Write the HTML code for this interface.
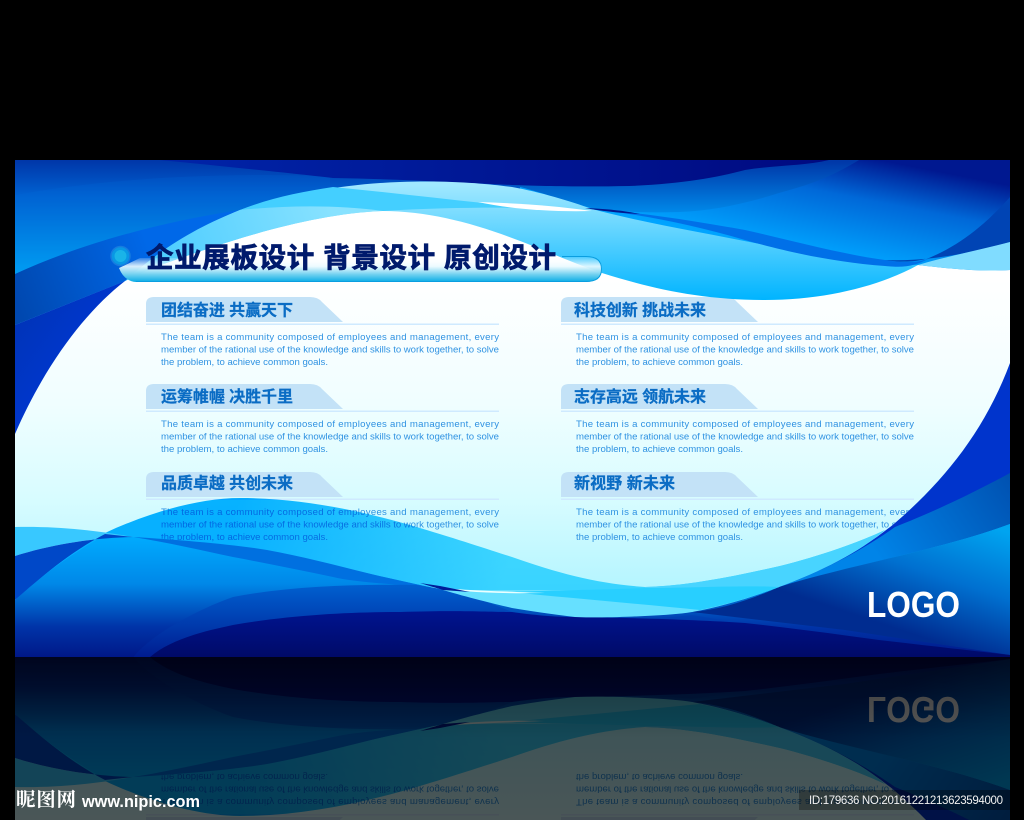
<!DOCTYPE html>
<html><head><meta charset="utf-8"><style>
html,body{margin:0;padding:0;background:#000;width:1024px;height:820px;overflow:hidden}
svg{display:block}
.t{font-family:"Liberation Sans","Noto Sans CJK SC",sans-serif;font-weight:700}
.h{font-size:16px;fill:#0a6cc4;stroke:#0a6cc4;stroke-width:.25}
.b{font-family:"Liberation Sans",sans-serif;font-size:9.6px;fill:#2f92e2}
</style></head><body>
<svg width="1024" height="820" viewBox="0 0 1024 820" xmlns="http://www.w3.org/2000/svg">
<defs>
<clipPath id="bc"><rect x="15" y="160" width="995" height="497"/></clipPath>
<clipPath id="rc"><rect x="15" y="657" width="995" height="163"/></clipPath>
<linearGradient id="base" gradientUnits="userSpaceOnUse" x1="0" y1="280" x2="0" y2="590"><stop offset="0" stop-color="#fff"/><stop offset=".4" stop-color="#f0feff"/><stop offset=".7" stop-color="#d8fcff"/><stop offset="1" stop-color="#b4f5ff"/></linearGradient>
<linearGradient id="topL" gradientUnits="userSpaceOnUse" x1="60" y1="160" x2="60" y2="275"><stop offset="0" stop-color="#0036a8"/><stop offset=".3" stop-color="#0060d0"/><stop offset="1" stop-color="#00a8f8"/></linearGradient>
<linearGradient id="topR" gradientUnits="userSpaceOnUse" x1="880" y1="160" x2="860" y2="262"><stop offset="0" stop-color="#001890"/><stop offset=".4" stop-color="#0068d8"/><stop offset="1" stop-color="#00a4ff"/></linearGradient>
<linearGradient id="swoosh" gradientUnits="userSpaceOnUse" x1="0" y1="185" x2="0" y2="300"><stop offset="0" stop-color="#a0e8ff"/><stop offset=".4" stop-color="#62d4ff"/><stop offset="1" stop-color="#00b4ff"/></linearGradient>
<linearGradient id="mid" gradientUnits="userSpaceOnUse" x1="0" y1="162" x2="0" y2="212"><stop offset="0" stop-color="#0038a8"/><stop offset="1" stop-color="#0088e8"/></linearGradient>
<linearGradient id="dark" gradientUnits="userSpaceOnUse" x1="160" y1="0" x2="830" y2="0"><stop offset="0" stop-color="#0024a8"/><stop offset="1" stop-color="#000a80"/></linearGradient>
<linearGradient id="cres" gradientUnits="userSpaceOnUse" x1="125" y1="280" x2="330" y2="205"><stop offset="0" stop-color="#40c8ff"/><stop offset="1" stop-color="#88e2ff"/></linearGradient>
<linearGradient id="wedge" gradientUnits="userSpaceOnUse" x1="15" y1="320" x2="100" y2="380"><stop offset="0" stop-color="#0034b8"/><stop offset="1" stop-color="#0038d8"/></linearGradient>
<linearGradient id="wedgeL" gradientUnits="userSpaceOnUse" x1="15" y1="300" x2="150" y2="250"><stop offset="0" stop-color="#0048b0"/><stop offset="1" stop-color="#0068e8"/></linearGradient>
<linearGradient id="botB" gradientUnits="userSpaceOnUse" x1="0" y1="535" x2="0" y2="657"><stop offset="0" stop-color="#00acff"/><stop offset=".4" stop-color="#0088e8"/><stop offset=".75" stop-color="#0034a8"/><stop offset="1" stop-color="#001888"/></linearGradient>
<linearGradient id="botM" gradientUnits="userSpaceOnUse" x1="0" y1="585" x2="0" y2="657"><stop offset="0" stop-color="#0060d0"/><stop offset="1" stop-color="#001c90"/></linearGradient>
<linearGradient id="botD" gradientUnits="userSpaceOnUse" x1="0" y1="610" x2="0" y2="657"><stop offset="0" stop-color="#001490"/><stop offset="1" stop-color="#000a68"/></linearGradient>
<linearGradient id="rightB" gradientUnits="userSpaceOnUse" x1="1000" y1="530" x2="960" y2="650"><stop offset="0" stop-color="#00a4f0"/><stop offset=".5" stop-color="#0070d0"/><stop offset="1" stop-color="#002c90"/></linearGradient>
<linearGradient id="rightM" gradientUnits="userSpaceOnUse" x1="1010" y1="470" x2="880" y2="560"><stop offset="0" stop-color="#0050b0"/><stop offset="1" stop-color="#0084e8"/></linearGradient>
<linearGradient id="wave" gradientUnits="userSpaceOnUse" x1="240" y1="498" x2="500" y2="590"><stop offset="0" stop-color="#08b4ff"/><stop offset="1" stop-color="#50dcff"/></linearGradient>
<linearGradient id="pill" gradientUnits="userSpaceOnUse" x1="0" y1="256" x2="0" y2="282"><stop offset="0" stop-color="#fff" stop-opacity="0"/><stop offset=".4" stop-color="#eafaff" stop-opacity=".92"/><stop offset=".7" stop-color="#74d2f0"/><stop offset="1" stop-color="#08ace6"/></linearGradient>
<linearGradient id="fade" gradientUnits="userSpaceOnUse" x1="0" y1="657" x2="0" y2="820"><stop offset="0" stop-color="#000" stop-opacity=".35"/><stop offset=".5" stop-color="#000" stop-opacity="0"/></linearGradient>

<g id="art" clip-path="url(#bc)">
  <rect x="15" y="160" width="995" height="497" fill="url(#base)"/>

  <g id="sec">
    <path d="M146,322V304Q146,297 154,297H310Q318,297 322,302L343,322Z" fill="#c3e2f7"/>
    <rect x="146" y="323.500" width="353" height="1.500" fill="#cfeaff"/>
    <text class="b" x="161" y="340" textLength="338" lengthAdjust="spacing">The team is a community composed of employees and management, every</text>
    <text class="b" x="161" y="352.500" textLength="338" lengthAdjust="spacing">member of the rational use of the knowledge and skills to work together, to solve</text>
    <text class="b" x="161" y="365" textLength="167" lengthAdjust="spacing">the problem, to achieve common goals.</text>
  </g>
  <text class="t h" x="161" y="315.500" textLength="132">团结奋进 共赢天下</text>
  <use href="#sec" x="0" y="87"/>
  <text class="t h" x="161" y="402" textLength="132">运筹帷幄 决胜千里</text>
  <use href="#sec" x="0" y="175"/>
  <text class="t h" x="161" y="488.500" textLength="132">品质卓越 共创未来</text>
  <use href="#sec" x="415" y="0"/>
  <text class="t h" x="574" y="315.500" textLength="132">科技创新 挑战未来</text>
  <use href="#sec" x="415" y="87"/>
  <text class="t h" x="574" y="402" textLength="132">志存高远 领航未来</text>
  <use href="#sec" x="415" y="175"/>
  <text class="t h" x="574" y="488.500" textLength="101">新视野 新未来</text>

  <!-- top area -->
  <path d="M15,160H1010V270C975,272 945,268 918,265L765,290L520,200L383,205L240,215L125,281L15,325Z" fill="url(#topR)"/>
  <path d="M15,160H520V200L383,205L240,215L125,281L15,325Z" fill="url(#topL)"/>
  <path d="M15,195C100,180 200,172 330,176V200L240,210L15,285Z" fill="#0070e0" opacity=".18"/>
  <path d="M15,274C80,244 160,222 240,210C200,228 160,252 125,281L15,325Z" fill="url(#wedgeL)"/>
  <path d="M15,325L125,281C85,312 45,365 15,434Z" fill="url(#wedge)"/>
  <!-- top dark -->
  <path d="M859,160C830,178 805,186 779,193C745,204 710,211 679,212C650,213 620,212 595,209C560,200 535,190 512,185L600,180L829,160Z" fill="url(#mid)"/>
  <path d="M160,160H829C805,166 775,165 745,170C715,178 680,184 629,186C580,187 540,186 512,185C450,182 390,179 333,178C280,172 220,166 160,160Z" fill="url(#dark)"/>
  <!-- cyan swoosh -->
  <path d="M125,281C150,258 195,228 240,210C280,196 340,184 400,182C450,180 490,184 512,187C540,192 570,201 592,209C640,222 700,232 760,244C810,254 860,264 918,265C880,286 825,300 765,300C700,300 650,288 602,273C570,262 540,248 512,238C470,222 425,211 383,211C330,213 270,228 210,248C180,258 150,268 125,281Z" fill="url(#swoosh)"/>
  <path d="M125,281C165,245 200,226 240,210C290,205 340,205 383,211C330,213 270,228 210,248C180,258 150,268 125,281Z" fill="url(#cres)"/>
  <path d="M333,187C385,192 435,198 483,203C510,206 540,207 560,209C520,207 450,207 383,211C340,205 290,205 240,210C270,198 300,192 333,187Z" fill="#44cfff"/>
  <path d="M478,202C510,203 550,205 592,211C550,212 510,209 478,202Z" fill="#fff"/>
  <!-- blue band -->
  <path d="M589,209C640,212 700,222 745,230C790,240 840,254 885,260C905,263 918,263 930,258C915,266 905,268 885,266C830,262 780,250 745,240C690,224 640,214 589,209Z" fill="#0070e8"/>
  <path d="M585,208C610,209 625,211 640,214C620,213 600,211 585,208Z" fill="#001a90"/>
  <!-- right wedge + cyan -->
  <path d="M1010,197C985,225 960,245 929,258C912,263 898,262 885,260C930,262 975,252 1010,242Z" fill="#0044b4"/>
  <path d="M918,265C940,258 980,250 1010,242V270C975,272 945,268 918,265Z" fill="#80dcff"/>

  <!-- lower right wedges -->
  <path d="M1010,363C985,430 945,480 895,523C860,552 820,572 779,587L820,600H1010Z" fill="#0034cc"/>
  <path d="M1010,473C960,500 925,515 895,527C860,552 820,572 779,587L880,600H1010Z" fill="url(#rightM)"/>

  <!-- wave: multiplied so the section text shows through, darker -->
  <path d="M15,600C50,565 75,548 105,533C150,512 200,498 240,498C300,498 360,510 420,528C460,540 490,550 512,557C560,574 600,584 645,587C690,586 740,575 780,566C820,556 860,542 885,530C860,552 820,572 779,587L700,612H540L443,590L133,537L105,560Z" fill="url(#wave)" style="mix-blend-mode:multiply"/>
  <path d="M15,527C60,526 100,531 133,537C90,538 50,545 15,556Z" fill="#38c8ff"/>

  <!-- bottom -->
  <path d="M15,600C45,572 75,552 105,535L133,537C230,540 350,570 443,590C480,598 500,606 540,612L692,612L780,587C850,565 940,550 1010,524V657H15Z" fill="url(#botB)"/>
  <path d="M1010,524C940,550 850,565 779,587C750,600 720,610 692,612L845,630L1010,655Z" fill="url(#rightB)"/>
  <path d="M15,556C50,545 90,538 133,537L105,534C70,552 40,578 15,600Z" fill="#0048c8"/>
  <path d="M133,537C180,540 230,544 267,550C300,556 335,565 367,573C395,580 420,585 443,590C425,588 410,586 400,585C375,583 350,581 333,577C300,570 265,563 233,557C200,550 165,542 133,537Z" fill="#0070e0"/>
  <path d="M133,658C145,640 190,612 233,597C290,586 360,584 417,585C450,590 485,600 512,612C570,620 650,620 692,615L880,645L1010,657Z" fill="url(#botM)"/>
  <path d="M150,657C170,640 200,632 233,625C290,615 350,612 400,612C460,610 490,612 512,612C540,616 560,617 572,617C640,618 700,620 745,623C790,628 835,634 879,640C930,646 975,651 1010,655V657Z" fill="url(#botD)"/>

  <!-- cyan ribbons in the middle -->
  <path d="M645,587C690,586 740,575 780,566C820,556 860,542 885,530C860,552 820,572 779,587C750,590 700,592 645,594Z" fill="#48d4ff"/>
  <path d="M443,590C470,598 495,604 512,608C530,611 550,614 575,617C600,618 625,617 645,616C665,615 680,614 692,612C720,607 750,598 779,587C745,589 700,591 645,594C600,590 560,590 512,590Z" fill="#66e0ff"/>
  <path d="M510,592C560,590 600,590 645,588C690,588 740,585 779,587C750,598 725,605 700,610C640,604 570,598 510,592Z" fill="#28cfff"/>
  <path d="M430,587C460,590 490,591 545,593C500,594 460,592 430,587Z" fill="#eaffff"/>
  <path d="M420,583L443,590L470,592L440,586Z" fill="#001c98"/>

  <!-- title -->
  <path d="M119,268Q124,281 136,282H586Q602,282 602,269Q602,257 586,256H560L566,258H140Z" fill="url(#pill)"/>
  <path d="M562,256.500H586Q601.500,256.500 601.500,269Q601.500,281.500 586,281.500H136" fill="none" stroke="#0a9ee0" stroke-width="1"/>
  <circle cx="120.500" cy="256" r="9.500" fill="#0a9ee6" stroke="#1a7fe0" stroke-width="1.500" opacity=".9"/>
  <circle cx="120.500" cy="256" r="6" fill="#1ab4e8"/>
  <text class="t" x="146" y="267" font-size="27.500" textLength="410" fill="#001a6c" stroke="#001a6c" stroke-width=".8">企业展板设计 背景设计 原创设计</text>
  <text class="t" x="867" y="617" font-size="36" textLength="93" lengthAdjust="spacingAndGlyphs" fill="#fff">LOGO</text>
</g>
</defs>

<rect width="1024" height="820" fill="#000"/>
<use href="#art"/>
<g clip-path="url(#rc)">
  <g opacity=".34" transform="translate(0,1314) scale(1,-1)"><use href="#art"/></g>
  <rect x="15" y="657" width="995" height="163" fill="url(#fade)"/>
</g>

<rect x="799" y="790" width="211" height="20" fill="#000" fill-opacity=".3"/>
<text x="809" y="804" font-family="'Liberation Sans',sans-serif" font-size="11.500" textLength="194" fill="#f2f2f2">ID:179636 NO:20161221213623594000</text>
<text x="16" y="806" font-family="'Noto Serif CJK SC',serif" font-weight="700" font-size="19.500" textLength="60" fill="#fff">昵图网</text>
<text x="82" y="807" font-family="'Liberation Sans',sans-serif" font-weight="700" font-size="17" textLength="118" lengthAdjust="spacingAndGlyphs" fill="#fff">www.nipic.com</text>
</svg>
</body></html>
